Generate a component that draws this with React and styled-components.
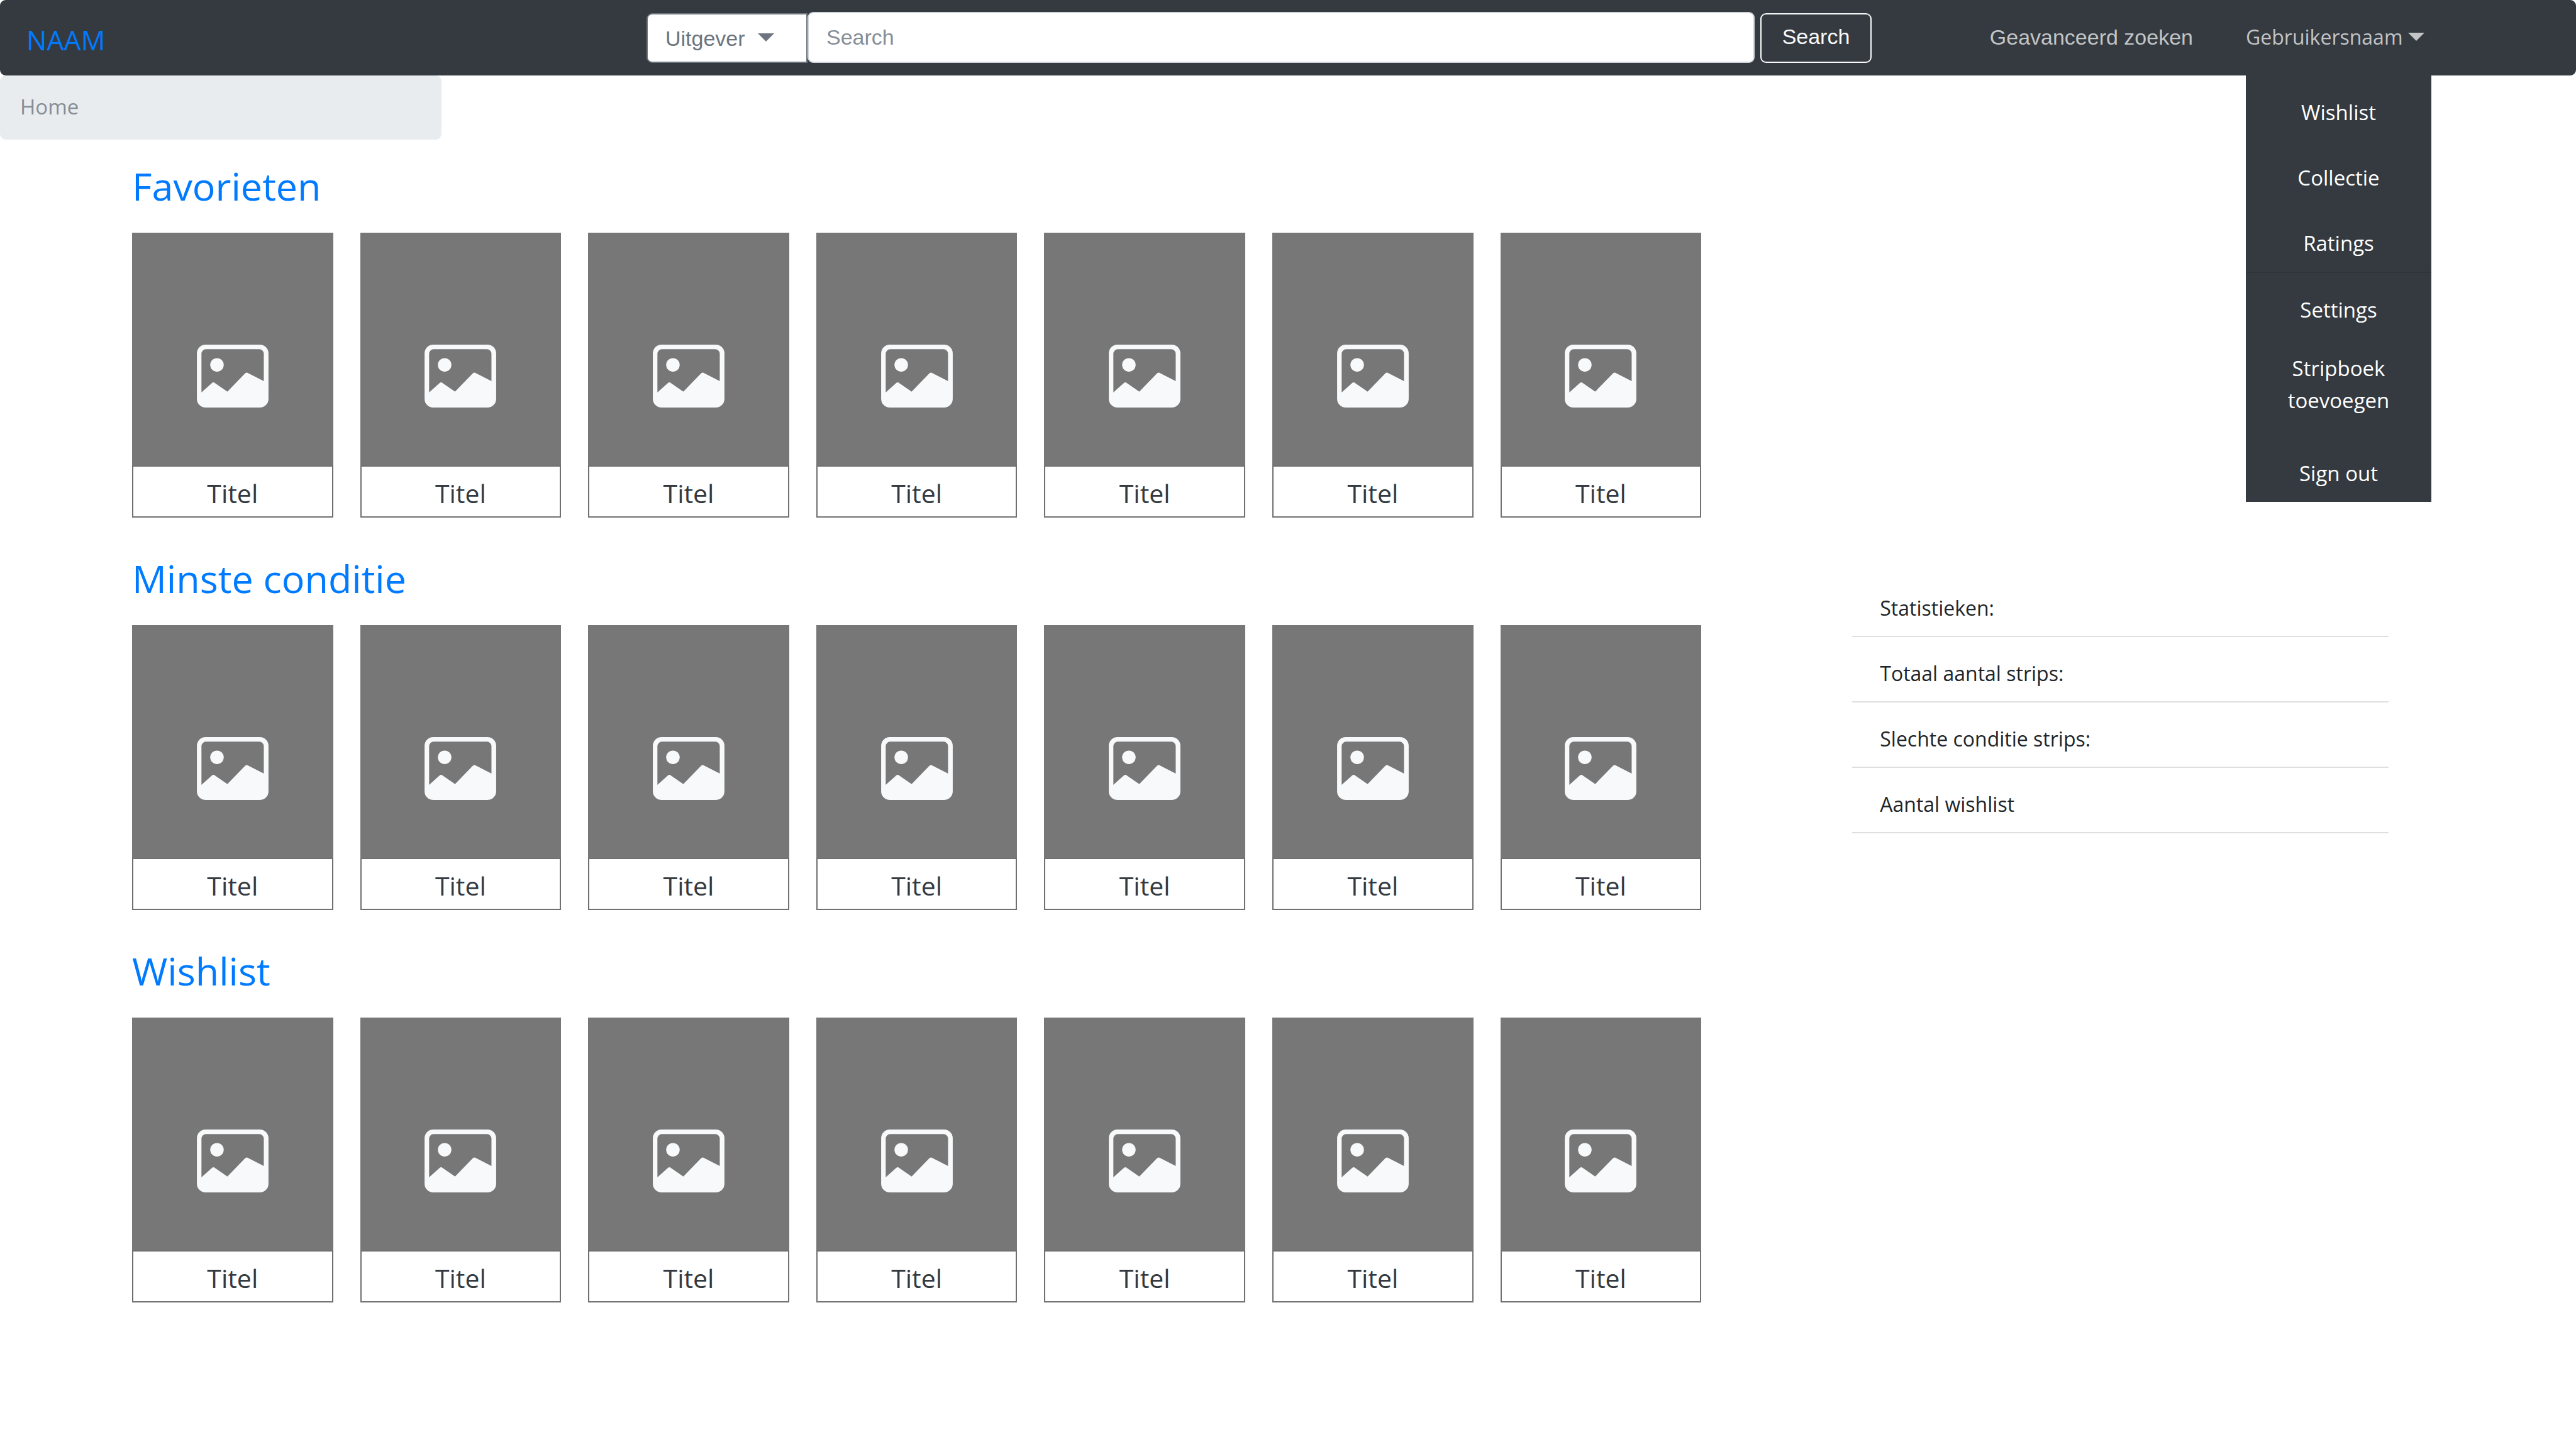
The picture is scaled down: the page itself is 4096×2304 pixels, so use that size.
import React from "react";
import styled, { createGlobalStyle } from "styled-components";

const GlobalStyle = createGlobalStyle`
  *, *::before, *::after { box-sizing: border-box; }
  body {
    margin: 0;
    background: #fff;
    color: #212529;
    font-family: "Open Sans", "Noto Sans", sans-serif;
    font-size: 33px;
    line-height: 51px;
  }
`;

const arial = `"Liberation Sans", Arial, sans-serif`;

const Header = styled.header`
  display: grid;
  grid-template-columns: 1028fr 1948fr 1120fr;
  height: 120px;
  background: #343a40;
  border-radius: 9px;
`;

const Brand = styled.a`
  align-self: center;
  justify-self: start;
  padding: 6px 0 0 42px;
  color: #007bff;
  font-size: 43px;
  text-decoration: none;
`;

const SearchForm = styled.form`
  display: flex;
  align-items: flex-end;
  padding-bottom: 20px;
`;

const SelectBox = styled.div`
  position: relative;
  flex: none;
  width: 256px;
`;

const Select = styled.select`
  appearance: none;
  display: block;
  width: 100%;
  height: 79px;
  padding: 0 28px;
  border: 2px solid #6c757d;
  border-radius: 9px 0 0 9px;
  background: #fff;
  color: #6c757d;
  font: 34px ${arial};
`;

const SelectCaret = styled.svg`
  position: absolute;
  top: 32px;
  right: 53px;
  pointer-events: none;
`;

const SearchInput = styled.input`
  flex: 1;
  min-width: 0;
  height: 81px;
  padding: 0 28px;
  border: 2px solid #ced4da;
  border-radius: 9px;
  background: #fff;
  color: #495057;
  font: 34px ${arial};
  &::placeholder { color: #868e96; opacity: 1; }
`;

const SearchButton = styled.button`
  flex: none;
  width: 177px;
  height: 79px;
  margin-left: 9px;
  padding: 0 0 4px;
  border: 2px solid #f8f9fa;
  border-radius: 9px;
  background: transparent;
  color: #f8f9fa;
  font: 34px ${arial};
`;

const Nav = styled.nav`
  display: flex;
  justify-content: flex-end;
  gap: 84px;
  padding-right: 230px;
`;

const NavLink = styled.a`
  align-self: center;
  padding-bottom: 2px;
  color: #c2c4c6;
  font: 34px ${arial};
  text-decoration: none;
  white-space: nowrap;
`;

const UserMenu = styled.div`
  position: relative;
  display: flex;
  width: 295px;
`;

const UserButton = styled.button`
  display: flex;
  align-items: center;
  gap: 8px;
  padding: 0 0 4px;
  border: 0;
  background: none;
  color: #c2c4c6;
  font: inherit;
  font-size: 32px;
`;

const Menu = styled.ul`
  position: absolute;
  top: 100%;
  left: 0;
  width: 100%;
  margin: 0;
  padding: 0;
  list-style: none;
  background: #343a40;
`;

const MenuItem = styled.li`
  border-top: ${(p) => (p.$divided ? "2px solid #2f3439" : "0")};
`;

const MenuLink = styled.a`
  display: block;
  padding: ${(p) => (p.$tall ? "22px 60px 32px" : "33px 20px 20px")};
  color: #fff;
  text-align: center;
  text-decoration: none;
`;

const Breadcrumb = styled.nav`
  width: 702px;
  padding: 24px 32px 27px;
  background: #e9ecef;
  border-radius: 9px;
  color: #868e96;
`;

const Main = styled.main`
  display: grid;
  grid-template-columns: minmax(0, 2496fr) minmax(0, 853fr);
  align-items: start;
  gap: 240px;
  padding: 38px 298px 60px 210px;
`;

const Shelves = styled.div`
  display: grid;
  gap: 61px;
`;

const ShelfTitle = styled.h2`
  margin: 0 0 38px;
  color: #007bff;
  font-size: 61px;
  font-weight: 400;
  line-height: 72px;
`;

const CardRow = styled.div`
  display: grid;
  grid-template-columns: repeat(7, minmax(0, 1fr));
  gap: 43px;
`;

const Card = styled.figure`
  margin: 0;
`;

const Cover = styled.div`
  display: flex;
  align-items: center;
  justify-content: center;
  height: 370px;
  padding-top: 86px;
  background: #777;
  color: #f8f9fa;
`;

const Caption = styled.figcaption`
  padding: 17px 0 11px;
  border: 2px solid #707070;
  color: #343a40;
  font-size: 41px;
  text-align: center;
`;

const Stats = styled.ul`
  margin: 649px 0 0;
  padding: 0;
  list-style: none;
  font-size: 32px;
`;

const Stat = styled.li`
  padding: 32px 44px 19px;
  border-bottom: 2px solid #dfdfdf;
`;

const Triangle = (
  <path d="M0 0H26L13 13Z" fill="currentColor" />
);

function PictureIcon() {
  return (
    <svg width="114" height="100" viewBox="0 0 214 188" fill="currentColor" aria-hidden="true">
      <path
        fillRule="evenodd"
        d="M26 0H188A26 26 0 0 1 214 26V162A26 26 0 0 1 188 188H26A26 26 0 0 1 0 162V26A26 26 0 0 1 26 0ZM27 13.8A13.4 13.4 0 0 0 13.6 27.2V142.7L44.6 115Q49.4 111 54.3 115L91.1 140.3L144 86Q148.8 82 153 85L200 109V27.2A13.4 13.4 0 0 0 186.6 13.8Z"
      />
      <circle cx="60" cy="60.5" r="20.2" />
    </svg>
  );
}

const menuItems = [
  { text: "Wishlist" },
  { text: "Collectie" },
  { text: "Ratings" },
  { text: "Settings", divided: true },
  { text: "Stripboek toevoegen", tall: true },
  { text: "Sign out" },
];

const shelves = ["Favorieten", "Minste conditie", "Wishlist"];
const titles = Array.from({ length: 7 }, () => "Titel");
const stats = ["Statistieken:", "Totaal aantal strips:", "Slechte conditie strips:", "Aantal wishlist"];

export default function App() {
  return (
    <>
      <GlobalStyle />
      <Header>
        <Brand href="#">NAAM</Brand>
        <SearchForm role="search" onSubmit={(e) => e.preventDefault()}>
          <SelectBox>
            <Select aria-label="Uitgever">
              <option>Uitgever</option>
            </Select>
            <SelectCaret width="26" height="13" viewBox="0 0 26 13" color="#6c757d" aria-hidden="true">
              {Triangle}
            </SelectCaret>
          </SelectBox>
          <SearchInput type="search" placeholder="Search" aria-label="Search" />
          <SearchButton type="submit">Search</SearchButton>
        </SearchForm>
        <Nav>
          <NavLink href="#">Geavanceerd zoeken</NavLink>
          <UserMenu>
            <UserButton type="button" aria-haspopup="true" aria-expanded="true">
              Gebruikersnaam
              <svg width="26" height="13" viewBox="0 0 26 13" aria-hidden="true">
                {Triangle}
              </svg>
            </UserButton>
            <Menu>
              {menuItems.map((item) => (
                <MenuItem key={item.text} $divided={item.divided}>
                  <MenuLink href="#" $tall={item.tall}>{item.text}</MenuLink>
                </MenuItem>
              ))}
            </Menu>
          </UserMenu>
        </Nav>
      </Header>
      <Breadcrumb aria-label="Breadcrumb">Home</Breadcrumb>
      <Main>
        <Shelves>
          {shelves.map((name) => (
            <section key={name}>
              <ShelfTitle>{name}</ShelfTitle>
              <CardRow>
                {titles.map((title, i) => (
                  <Card key={i}>
                    <Cover><PictureIcon /></Cover>
                    <Caption>{title}</Caption>
                  </Card>
                ))}
              </CardRow>
            </section>
          ))}
        </Shelves>
        <Stats>
          {stats.map((label) => (
            <Stat key={label}>{label}</Stat>
          ))}
        </Stats>
      </Main>
    </>
  );
}
